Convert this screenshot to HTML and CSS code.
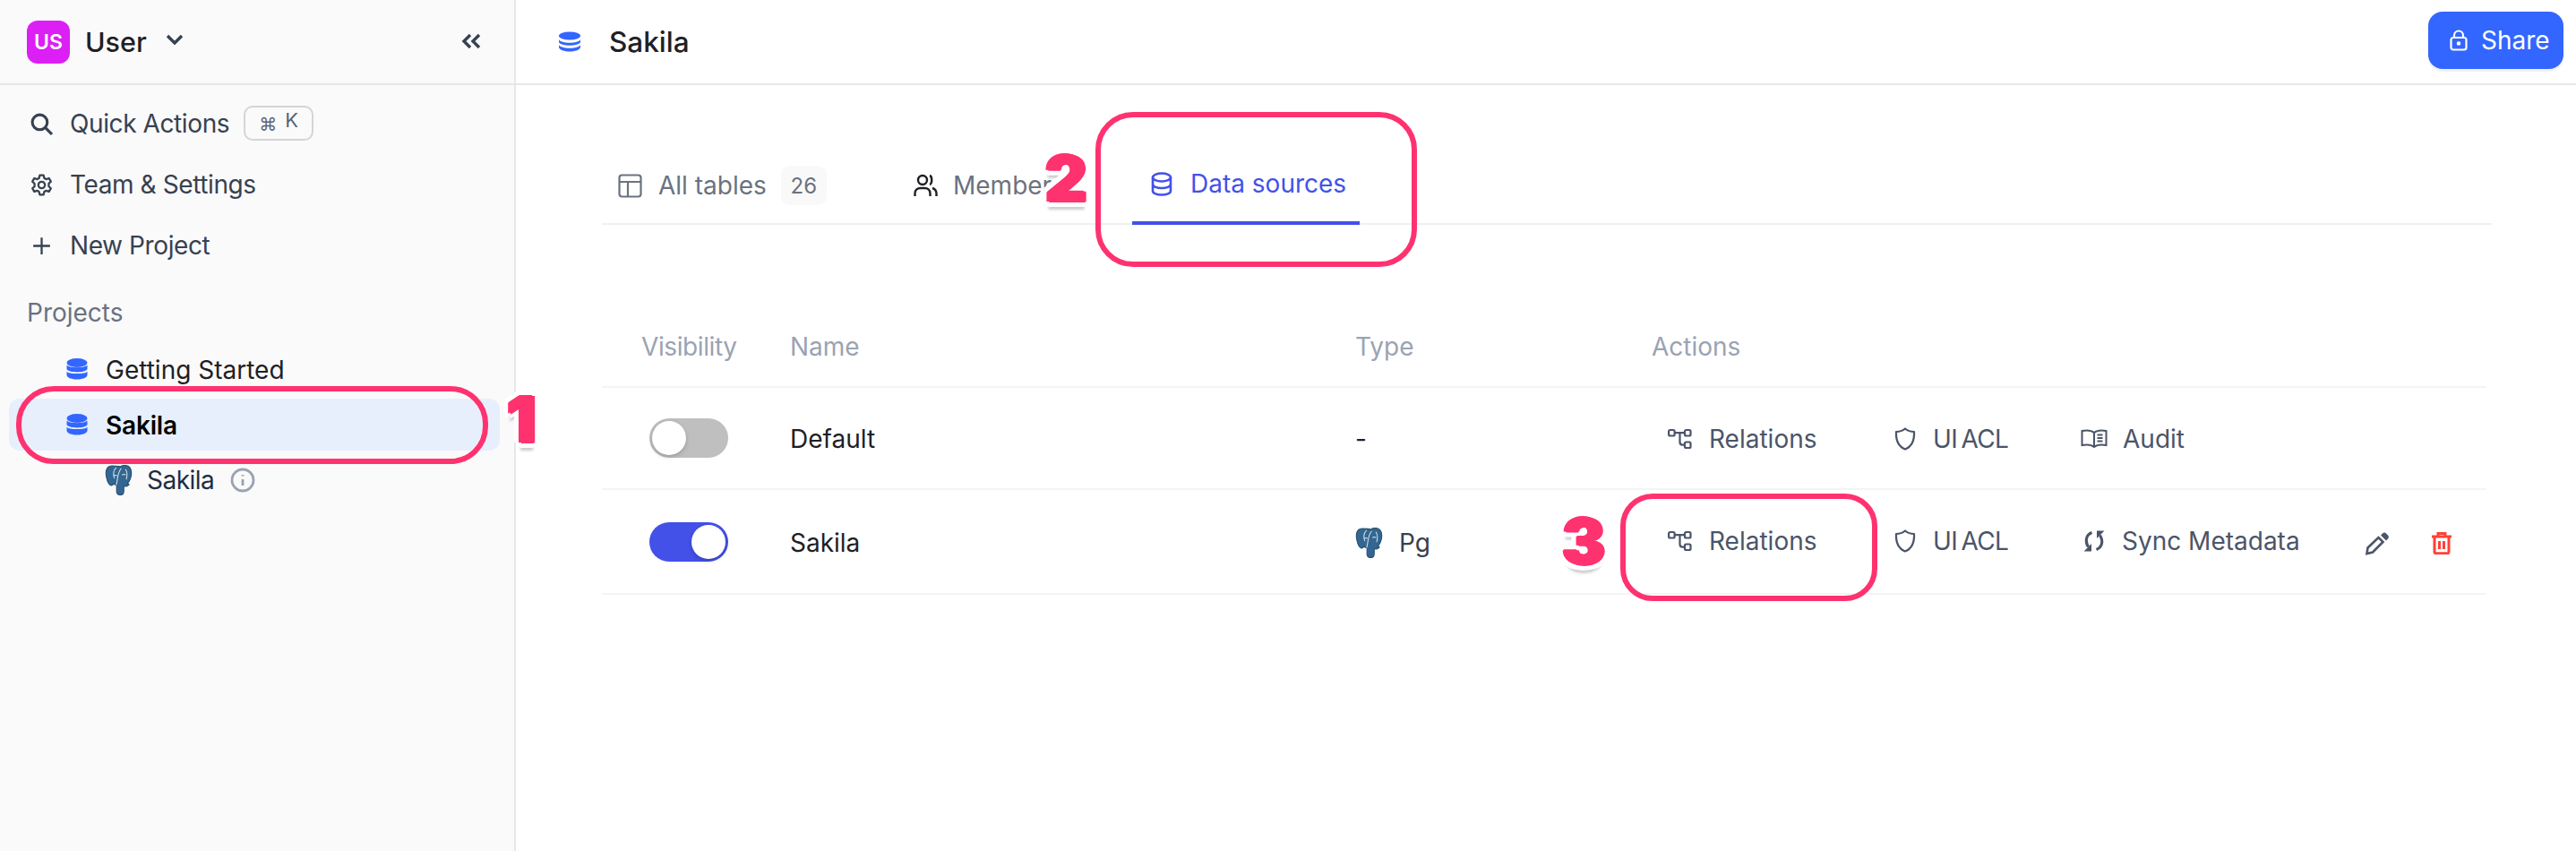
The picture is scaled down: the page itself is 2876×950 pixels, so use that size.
FILE: index.html
```html
<!DOCTYPE html>
<html lang="en">
<head>
    <meta charset="UTF-8">
    <title>Sakila - Data sources</title>
    <link rel="stylesheet" href="styles.css">
</head>
<body>
    <svg class="defs" width="0" height="0">
        <symbol id="db-solid" viewBox="0 0 24 24">
            <ellipse cx="12" cy="5" rx="11.500" ry="5" fill="currentColor"/>
            <path d="M.5 7.600C2 11 22 11 23.500 7.600V12C22 16.500 2 16.500 .5 12Z" fill="currentColor"/>
            <path d="M.5 14.400C2 18 22 18 23.500 14.400V19C22 25 2 25 .5 19Z" fill="currentColor"/>
        </symbol>
        <symbol id="elephant" viewBox="0 0 34 36">
            <path d="M8 1C3 1 .5 5 1 11c.5 5 2 10 4.500 12.500 1.700 1.500 3.500 .5 4.500-1.500 1 1.200 2.500 2 3.500 2v7c0 3 2 4.500 4.500 4.500s4-1.500 4-4.500v-6c1 .5 4 1 6-1.500 .5-.8-.5-1.200-2-1 2.500-3 5-8 5-13 0-6-3-9-8-9-2 0-3.500.5-5 1.500C15 1.500 11 1 8 1Z" fill="#336791" stroke="#27506f" stroke-width="1.200"/>
            <path d="M13 3c-3 3-4 8-2 13M13 24c2-6 1-14 6-20M24 5c2 3 2 8 1 12M10 13c1-1 3-1 4 0M20 12c1-1 3-1 4 0" fill="none" stroke="#d5e2ee" stroke-width="1.100"/>
        </symbol>
        <symbol id="relations" viewBox="0 0 27 24">
            <g fill="none" stroke="currentColor" stroke-width="2.200">
                <rect x="1.100" y="2" width="6.500" height="6.500" rx="1.500"/>
                <rect x="19" y="2" width="6.500" height="6.500" rx="1.500"/>
                <rect x="19" y="15.500" width="6.500" height="6.500" rx="1.500"/>
                <path d="M7.600 5.200H19M13.500 5.200V15.500c0 2 1 3.200 3 3.200H19"/>
            </g>
        </symbol>
        <symbol id="shield" viewBox="0 0 24 26">
            <path d="M12 1.500c3 2.500 6 3.500 10 3.500 .5 9-1.500 16-10 19.500C3.500 21 1.500 14 2 5c4 0 7-1 10-3.500Z" fill="none" stroke="currentColor" stroke-width="2.200" stroke-linejoin="round"/>
        </symbol>
    </svg>

    <div class="app">
        <aside class="sidebar">
            <div class="workspace">
                <span class="avatar">US</span>
                <span class="workspace-name">User</span>
                <svg class="chevron" viewBox="0 0 20 12"><path d="M2 2l8 8 8-8"/></svg>
                <svg class="collapse" viewBox="0 0 22 18"><path d="M10 2L3 9l7 7M20 2l-7 7 7 7"/></svg>
            </div>

            <nav class="side-nav">
                <div class="nav-item">
                    <svg class="nav-icon search" viewBox="0 0 24 24"><circle cx="10" cy="10" r="8"/><path d="M15.800 15.800L23 23"/></svg>
                    <span class="nav-label">Quick Actions</span>
                    <span class="kbd"><span class="kbd-cmd">⌘</span><span class="kbd-key">K</span></span>
                </div>
                <div class="nav-item">
                    <svg class="nav-icon" viewBox="0 0 24 24"><path d="M10 1.500h4l.8 3.200 2 1.100 3.100-1 2 3.500-2.300 2.200v2.900l2.300 2.200-2 3.500-3.100-1-2 1.100-.8 3.200h-4l-.8-3.200-2-1.100-3.100 1-2-3.500L4.400 13.500v-2.900L2.100 8.300l2-3.500 3.100 1 2-1.100Z" stroke-linejoin="round"/><circle cx="12" cy="12" r="3.500"/></svg>
                    <span class="nav-label">Team &amp; Settings</span>
                </div>
                <div class="nav-item">
                    <svg class="nav-icon" viewBox="0 0 24 24"><path d="M12 3v18M3 12h18"/></svg>
                    <span class="nav-label">New Project</span>
                </div>
            </nav>

            <div class="projects-title">Projects</div>
            <div class="projects">
                <div class="project">
                    <svg class="db-icon"><use href="#db-solid"/></svg>
                    <span class="project-name">Getting Started</span>
                </div>
                <div class="project active">
                    <svg class="db-icon"><use href="#db-solid"/></svg>
                    <span class="project-name">Sakila</span>
                </div>
                <div class="project source">
                    <svg class="pg-icon"><use href="#elephant"/></svg>
                    <span>Sakila</span>
                    <svg class="info-icon" viewBox="0 0 28 28"><circle cx="14" cy="14" r="12"/><path d="M14 13v7M14 8v1.500"/></svg>
                </div>
            </div>
        </aside>

        <main class="main">
            <header class="topbar">
                <svg class="title-icon" viewBox="0 0 28 24"><ellipse cx="14" cy="5" rx="12" ry="4.500" fill="currentColor"/><path d="M2 9c2 5 22 5 24 0v3c-2 5-22 5-24 0ZM2 15c2 5 22 5 24 0v3c-2 6-22 6-24 0Z" fill="currentColor"/></svg>
                <span class="title">Sakila</span>
                <button class="share">
                    <svg class="lock" viewBox="0 0 20 24"><rect x="1.500" y="9" width="17" height="13.500" rx="2.500"/><path d="M5 9V6.500a5 5 0 0 1 10 0V9"/><circle cx="10" cy="15.500" r="1.200" fill="#fff"/></svg>
                    Share
                </button>
            </header>

            <div class="content">
                <div class="tabs">
                    <div class="tab tab-tables">
                        <svg class="tab-icon" viewBox="0 0 27 27"><rect x="1.500" y="1.500" width="24" height="24" rx="3"/><path d="M1.500 9h24M11 9v16.500"/></svg>
                        <span>All tables</span>
                        <span class="badge">26</span>
                    </div>
                    <div class="tab tab-members">
                        <svg class="tab-icon dark" viewBox="0 0 27 27"><circle cx="10" cy="7" r="5"/><path d="M1.500 25v-3c0-4 3-6 6-6h5c3 0 6 2 6 6v3M18 2c3 1 3 9 0 10M21 16c3 1 4.500 3 4.500 6v3"/></svg>
                        <span>Members</span>
                    </div>
                    <div class="tab selected">
                        <svg class="tab-icon" viewBox="0 0 24 27"><ellipse cx="12" cy="6" rx="10" ry="4.500"/><path d="M2 6v15c0 6 20 6 20 0V6M2 13.500c0 6 20 6 20 0"/></svg>
                        <span>Data sources</span>
                    </div>
                </div>

                <div class="table">
                    <div class="row head">
                        <div class="cell-vis">Visibility</div>
                        <div>Name</div>
                        <div>Type</div>
                        <div>Actions</div>
                    </div>

                    <div class="row first">
                        <div class="cell-vis"><span class="toggle"><span class="knob"></span></span></div>
                        <div>Default</div>
                        <div>-</div>
                        <div class="actions">
                            <a class="action w-relations"><svg class="icon-relations"><use href="#relations"/></svg>Relations</a>
                            <a class="action w-acl"><svg class="icon-shield"><use href="#shield"/></svg><span class="acl">UI ACL</span></a>
                            <a class="action"><svg class="icon-book" viewBox="0 0 30 22"><path d="M15 4C12 1.500 7 1 1.500 2v16c5.500-1 10.500-.5 13.500 2 3-2.500 8-3 13.500-2V2C23 1 18 1.500 15 4ZM15 4v16M18.500 6.500h6M18.500 10h6M18.500 13.500h6"/></svg>Audit</a>
                        </div>
                    </div>

                    <div class="row second">
                        <div class="cell-vis"><span class="toggle on"><span class="knob"></span></span></div>
                        <div>Sakila</div>
                        <div class="type"><svg class="pg-icon"><use href="#elephant"/></svg>Pg</div>
                        <div class="actions raised">
                            <a class="action w-relations"><svg class="icon-relations"><use href="#relations"/></svg>Relations</a>
                            <a class="action w-acl"><svg class="icon-shield"><use href="#shield"/></svg><span class="acl">UI ACL</span></a>
                            <a class="action w-sync"><svg class="icon-sync" viewBox="0 0 24 24"><path class="sync-arc" d="M9.500 2.500C3 5 1.500 12 5.500 18.500M14.500 21.500C21 19 22.500 12 18.500 5.500"/><path d="M.5 23.500H9v-8.500ZM23.500 .5H15V9Z"/></svg>Sync Metadata</a>
                            <svg class="icon-pen" viewBox="0 0 28 26"><path class="pen-body" d="M2.500 24l1-6.500L15.500 6l5 5L9 22.500Z"/><path d="M18 3.500l2-2c1.200-1.200 2.800-1.200 4 0l2 2c1.200 1.200 1.200 2.800 0 4l-2 2Z"/></svg>
                            <svg class="icon-trash" viewBox="0 0 22 25"><path d="M0 5h22M7 4V1.500h8V4M3 5v17c0 1 .8 1.700 1.700 1.700h12.600c.9 0 1.700-.7 1.700-1.700V5M8.500 10v9M13.500 10v9"/></svg>
                        </div>
                    </div>
                </div>
            </div>
        </main>
    </div>

    <!-- callouts drawn on top of the screenshot -->
    <div class="ring ring-1"></div>
    <div class="ring ring-2"></div>
    <div class="ring ring-3"></div>
    <span class="mark mark-1">1</span>
    <span class="mark mark-2">2</span>
    <span class="mark mark-3">3</span>
</body>
</html>
```

FILE: styles.css
```css
* {
    box-sizing: border-box;
}

body {
    margin: 0;
    font-family: Inter, "Noto Sans", sans-serif;
    font-size: 28px;
    color: #1f2024;
    background-color: white;
    overflow: hidden;
}

.defs {
    position: absolute;
}

.app {
    display: flex;
    height: 950px;
}

/* sidebar */
.sidebar {
    width: 576px;
    flex-shrink: 0;
    background-color: #fafafa;
    border-right: 2px solid #e7e7e9;
}

.workspace {
    display: flex;
    align-items: center;
    height: 95px;
    padding-left: 30px;
    border-bottom: 2px solid #e7e7e9;
}

.avatar {
    display: flex;
    align-items: center;
    justify-content: center;
    width: 48px;
    height: 48px;
    border-radius: 12px;
    background-color: #dc1ff5;
    color: white;
    font-size: 23px;
    font-weight: 600;
}

.workspace-name {
    margin-left: 17px;
    font-size: 30.500px;
    font-weight: 500;
}

.chevron {
    width: 20px;
    height: 12px;
    margin-left: 21px;
    margin-bottom: 6px;
    fill: none;
    stroke: #374151;
    stroke-width: 3.400;
}

.collapse {
    width: 22px;
    height: 18px;
    margin-left: auto;
    margin-right: 37px;
    margin-bottom: 2px;
    fill: none;
    stroke: #374151;
    stroke-width: 3.400;
}

.side-nav {
    padding-top: 9px;
}

.nav-item {
    display: flex;
    align-items: center;
    height: 68px;
    padding-left: 34px;
    color: #374151;
}

.nav-icon {
    width: 25px;
    height: 25px;
    flex-shrink: 0;
    fill: none;
    stroke: #374151;
    stroke-width: 2.200;
}

.nav-icon.search {
    stroke-width: 3;
}

.nav-label {
    margin-left: 19px;
    letter-spacing: -0.4px;
}

.kbd {
    display: flex;
    gap: 9px;
    justify-content: center;
    align-items: flex-start;
    width: 78px;
    height: 39px;
    margin-left: 16px;
    margin-bottom: 2px;
    border: 2px solid #d4d5da;
    border-radius: 10px;
    color: #5b6475;
    font-size: 22px;
    line-height: 28px;
}

.kbd-cmd {
    margin-top: 5px;
    font-family: "DejaVu Sans", sans-serif;
    font-size: 20px;
}

.projects-title {
    margin: 21px 0 14px 30px;
    line-height: 40px;
    color: #6b7280;
}

.projects {
    display: flex;
    flex-direction: column;
    gap: 4px;
}

.project {
    display: flex;
    align-items: center;
    height: 58px;
    margin: 0 16px 0 10px;
    padding-left: 64px;
    border-radius: 12px;
}

.project-name {
    padding-top: 2px;
}

.project.active {
    background-color: #e8effc;
    color: black;
    font-weight: 600;
    letter-spacing: -0.2px;
}

.project.source {
    padding-left: 107px;
    color: #1f2d45;
    letter-spacing: -0.5px;
}

.db-icon {
    width: 24px;
    height: 24px;
    margin-right: 20px;
    color: #3366ff;
}

.pg-icon {
    width: 33px;
    height: 34px;
    flex-shrink: 0;
}

.source .pg-icon {
    margin-right: 14px;
}

.info-icon {
    width: 28px;
    height: 28px;
    margin-left: 18px;
    fill: none;
    stroke: #9aa3b2;
    stroke-width: 2.800;
}

/* main */
.main {
    flex: 1;
    min-width: 0;
}

.topbar {
    display: flex;
    align-items: center;
    height: 95px;
    padding-left: 46px;
    padding-right: 14px;
    border-bottom: 2px solid #e7e7e9;
}

.title-icon {
    width: 28px;
    height: 24px;
    color: #3366ff;
}

.title {
    margin-left: 30px;
    font-size: 31.500px;
    font-weight: 500;
}

.share {
    display: flex;
    align-items: center;
    gap: 15px;
    height: 64px;
    width: 151px;
    margin-left: auto;
    margin-bottom: 3px;
    padding: 0 0 0 24px;
    border: none;
    border-radius: 16px;
    background-color: #3366ff;
    box-shadow: 0 3px 2px rgba(60, 70, 110, 0.08);
    color: white;
    font-family: inherit;
    font-size: 28px;
}

.lock {
    width: 20px;
    height: 24px;
    fill: none;
    stroke: white;
    stroke-width: 2.200;
}

.content {
    padding: 0 94px 0 96px;
}

.tabs {
    display: flex;
    gap: 62px;
    height: 156px;
    padding-top: 64px;
    border-bottom: 2px solid #f0f0f1;
    color: #6b7280;
}

.tab {
    display: flex;
    align-items: center;
    height: 92px;
    padding: 4px 0 0 18px;
    margin-bottom: -2px;
    flex-shrink: 0;
}

.tab-tables {
    width: 268px;
}

.tab-members {
    width: 200px;
}

.tab.selected {
    width: 254px;
    padding-left: 21px;
    border-bottom: 4px solid #4351e8;
    color: #4351e8;
}

.tab-icon {
    width: 27px;
    height: 27px;
    margin-right: 18px;
    fill: none;
    stroke: #6b7280;
    stroke-width: 2.200;
}

.tab-icon.dark {
    margin-right: 17px;
    stroke: #1f2024;
    stroke-width: 2.400;
}

.selected .tab-icon {
    width: 24px;
    margin-right: 20px;
    stroke: #4351e8;
    stroke-width: 2.600;
}

.badge {
    display: flex;
    align-items: center;
    justify-content: center;
    width: 51px;
    height: 44px;
    margin-left: 16px;
    border-radius: 10px;
    background-color: #f9f9fa;
    font-size: 24px;
}

.table {
    margin-top: 91px;
    margin-right: 6px;
}

.row {
    display: grid;
    grid-template-columns: 210px 631px 331px 1fr;
    align-items: center;
    border-bottom: 2px solid #f4f4f5;
}

.row.head {
    height: 91px;
    color: #9aa3b2;
}

.row.first {
    height: 114px;
    padding-top: 2px;
}

.row.second {
    height: 117px;
    padding-top: 2px;
}

.cell-vis {
    padding-left: 44px;
    letter-spacing: -0.4px;
}

.row:not(.head) .cell-vis {
    padding-left: 53px;
    margin-bottom: 2px;
}

.toggle {
    display: flex;
    width: 88px;
    height: 44px;
    padding: 3px;
    border-radius: 22px;
    background-color: #bfbfbf;
}

.toggle.on {
    justify-content: flex-end;
    background-color: #4351e8;
}

.knob {
    width: 38px;
    height: 38px;
    border-radius: 50%;
    background-color: white;
    box-shadow: 0 2px 5px rgba(0, 0, 0, 0.2);
}

.type {
    display: flex;
    align-items: center;
    gap: 16px;
    color: #374151;
}

.actions {
    display: flex;
    align-items: center;
    padding-left: 18px;
    color: #4b5568;
}

.raised {
    margin-bottom: 4px;
}

.action {
    display: flex;
    align-items: center;
}

.acl {
    letter-spacing: -0.6px;
    word-spacing: -3px;
}

.w-relations {
    width: 253px;
}

.w-acl {
    width: 208px;
}

.w-sync {
    width: 317px;
}

.icon-relations {
    width: 27px;
    height: 24px;
    margin-right: 19px;
    color: #4b5568;
}

.icon-shield {
    width: 24px;
    height: 26px;
    margin-right: 19px;
    color: #4b5568;
}

.icon-book {
    width: 30px;
    height: 22px;
    margin-right: 17px;
    fill: none;
    stroke: #4b5568;
    stroke-width: 2;
}

.icon-sync {
    width: 24px;
    height: 24px;
    margin-left: 3px;
    margin-right: 19px;
    fill: #4b5568;
}

.sync-arc {
    fill: none;
    stroke: #4b5568;
    stroke-width: 3.200;
}

.icon-pen {
    width: 28px;
    height: 26px;
    margin-top: 6px;
    fill: #4b5568;
}

.pen-body {
    fill: none;
    stroke: #4b5568;
    stroke-width: 2.600;
}

.icon-trash {
    width: 22px;
    height: 25px;
    margin-left: 47px;
    margin-top: 6px;
    fill: none;
    stroke: #ff4136;
    stroke-width: 3;
}

/* callouts */
.ring {
    position: absolute;
    border: 6px solid #ff3270;
}

.ring-1 {
    left: 18px;
    top: 431px;
    width: 527px;
    height: 87px;
    border-radius: 42px;
}

.ring-2 {
    left: 1223px;
    top: 125px;
    width: 359px;
    height: 173px;
    border-radius: 42px;
}

.ring-3 {
    left: 1809px;
    top: 551px;
    width: 287px;
    height: 120px;
    border-radius: 36px;
}

/* pink copies thicken the digit, then white outline, then drop shadow */
.mark {
    position: absolute;
    font-weight: 900;
    font-size: 72px;
    line-height: 72px;
    color: #ff3270;
    text-shadow:
        2px 0 #ff3270, -2px 0 #ff3270, 1px 1px #ff3270, -1px -1px #ff3270,
        7px 0 #fff, -7px 0 #fff, 0 6px #fff, 0 -6px #fff,
        5px 5px #fff, -5px 5px #fff, 5px -5px #fff, -5px -5px #fff,
        0 9px 3px rgba(0, 0, 0, 0.2);
}

.mark-1 {
    left: 566px;
    top: 432px;
}

.mark-2 {
    left: 1167px;
    top: 163px;
}

.mark-3 {
    left: 1744px;
    top: 568px;
}
```
